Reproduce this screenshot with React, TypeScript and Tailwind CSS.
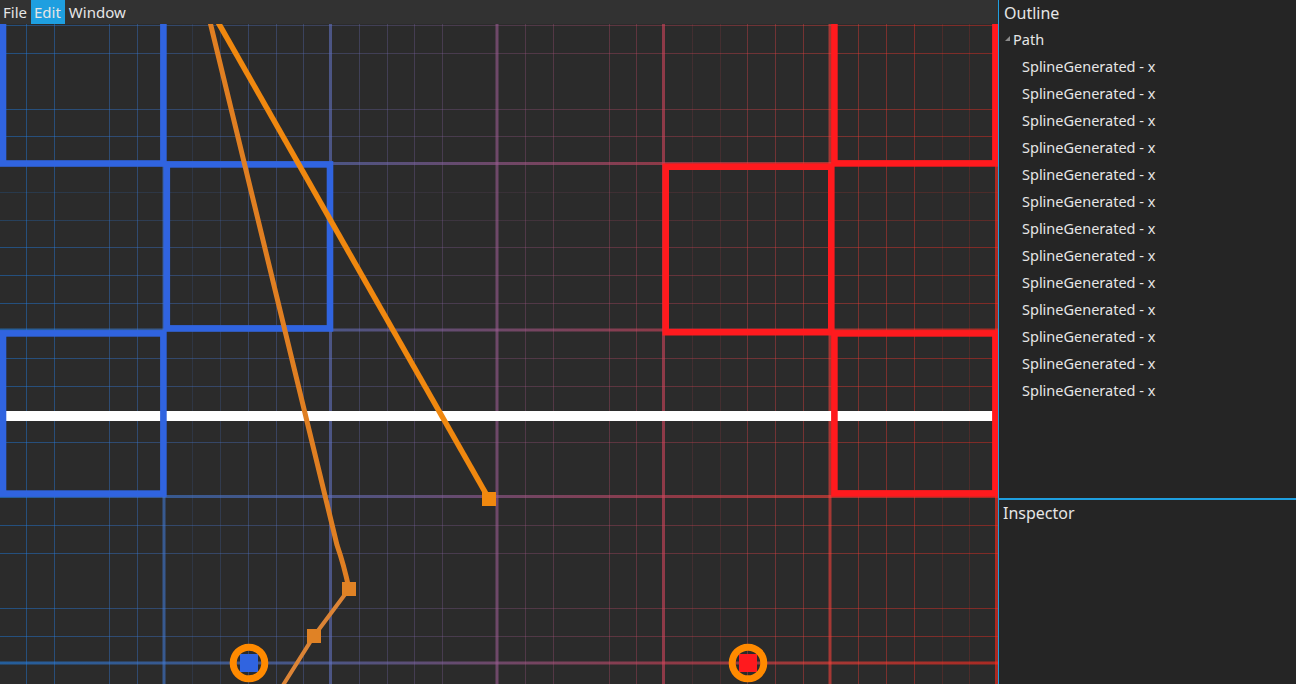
import React from "react";

const CELL = 166.5;
const X0 = -2.5;
const Y0 = -3;
const W = 998;
const TOP = 24;
const BOTTOM = 684;

// per major cell, how strong each of the 5 minor lines is drawn
const MINOR = [
  [1, 1, 0, 1, 1],
  [0.4, 0.6, 1, 1, 1],
  [1, 1, 1, 1, 0],
  [1, 1, 0, 1, 1],
  [0.4, 0.4, 1, 1, 1],
  [1, 1, 1, 0.4, 0.4],
];

function pattern(c: number) {
  return MINOR[((c % 6) + 6) % 6];
}

function Grid() {
  const minorV: { x: number; a: number }[] = [];
  const minorH: { y: number; a: number }[] = [];
  const majorV: number[] = [];
  const majorH: number[] = [];

  for (let c = -1; c < 8; c++) {
    const base = X0 + c * CELL;
    if (base > 0 && base < W) majorV.push(base);
    pattern(c).forEach((a, i) => {
      const x = Math.floor(base + ((i + 1) * CELL) / 6 + 1) + 0.5;
      if (a > 0 && x > 0 && x < W) minorV.push({ x, a });
    });
  }
  for (let r = -1; r < 6; r++) {
    const base = Y0 + r * CELL;
    if (base > TOP && base < BOTTOM) majorH.push(base);
    pattern(r).forEach((a, i) => {
      const y = Math.floor(base + ((i + 1) * CELL) / 6 + 1) + 0.5;
      if (a > 0 && y > TOP && y < BOTTOM) minorH.push({ y, a });
    });
  }

  return (
    <g>
      {minorV.map((l) => (
        <line key={"mv" + l.x} x1={l.x} x2={l.x} y1={TOP} y2={BOTTOM} stroke="url(#gridMinor)" strokeWidth={1} strokeOpacity={l.a} />
      ))}
      {minorH.map((l) => (
        <line key={"mh" + l.y} x1={0} x2={W} y1={l.y} y2={l.y} stroke="url(#gridMinor)" strokeWidth={1} strokeOpacity={l.a} />
      ))}
      {majorV.map((x) => (
        <line key={"Mv" + x} x1={x} x2={x} y1={TOP} y2={BOTTOM} stroke="url(#grid)" strokeWidth={3} strokeOpacity={0.6} />
      ))}
      {majorH.map((y) => (
        <line key={"Mh" + y} x1={0} x2={W} y1={y} y2={y} stroke="url(#grid)" strokeWidth={3} strokeOpacity={0.6} />
      ))}
    </g>
  );
}

const BLUE = "#3064e0";
const RED = "#ff1a1e";

// centre-line boxes [x1, y1, x2, y2]
const blueBoxes = [
  [3, -20, 163.4, 163.5],
  [166.8, 164.4, 330, 328.4],
  [3, 333.4, 163.4, 493.6],
];
const redBoxes = [
  [834.4, -20, 995.4, 163.4],
  [665.7, 166.7, 831.3, 332.2],
  [834.4, 333.4, 995.4, 493.4],
];

function Box({ b, color }: { b: number[]; color: string }) {
  return (
    <rect x={b[0]} y={b[1]} width={b[2] - b[0]} height={b[3] - b[1]} fill="none" stroke={color} strokeWidth={6.6} />
  );
}

function Canvas() {
  return (
    <div className="flex-1 bg-[#2b2b2b] overflow-hidden">
      <svg width={W} height={660} viewBox={`0 ${TOP} ${W} 660`} className="block">
        <defs>
          <linearGradient id="grid" gradientUnits="userSpaceOnUse" x1={0} y1={0} x2={W} y2={0}>
            <stop offset="0" stopColor="#1f80e6" />
            <stop offset="0.33" stopColor="#6171c0" />
            <stop offset="0.5" stopColor="#9b5b91" />
            <stop offset="0.665" stopColor="#d0445b" />
            <stop offset="0.83" stopColor="#f5403a" />
            <stop offset="1" stopColor="#ff2a1e" />
          </linearGradient>
          <linearGradient id="gridMinor" gradientUnits="userSpaceOnUse" x1={0} y1={0} x2={W} y2={0}>
            <stop offset="0" stopColor="#1a7ee6" stopOpacity={0.45} />
            <stop offset="0.33" stopColor="#6171c0" stopOpacity={0.32} />
            <stop offset="0.5" stopColor="#9b5b91" stopOpacity={0.3} />
            <stop offset="0.665" stopColor="#d0445b" stopOpacity={0.34} />
            <stop offset="0.83" stopColor="#f5403a" stopOpacity={0.38} />
            <stop offset="1" stopColor="#ff2a1e" stopOpacity={0.4} />
          </linearGradient>
        </defs>
        <Grid />
        <rect x={4} y={411} width={990} height={10} fill="#ffffff" />
        {blueBoxes.map((b, i) => (
          <Box key={"b" + i} b={b} color={BLUE} />
        ))}
        {redBoxes.map((b, i) => (
          <Box key={"r" + i} b={b} color={RED} />
        ))}

        {/* spline handles */}
        <path d="M204.7 0 L337 545 Q344 565 349 589" fill="none" stroke="#e07f22" strokeWidth={5} />
        <polyline points="349,589 314,636 280,690" fill="none" stroke="#dc8436" strokeWidth={4} />
        <rect x={342} y={582} width={14} height={14} fill="#e08225" />
        <rect x={307} y={629} width={14} height={14} fill="#e08225" />
        <line x1={205.4} y1={0} x2={489} y2={499} stroke="#f0880f" strokeWidth={5.5} />
        <rect x={482} y={492} width={14} height={14} fill="#f0880f" />

        {/* end points */}
        <rect x={240} y={654} width={18} height={18} fill={BLUE} />
        <circle cx={249} cy={663} r={15.8} fill="none" stroke="#ff8a00" strokeWidth={7} />
        <rect x={739} y={654} width={18} height={18} fill={RED} />
        <circle cx={748} cy={663} r={15.8} fill="none" stroke="#ff8a00" strokeWidth={7} />
      </svg>
    </div>
  );
}

function MenuBar() {
  const items = ["File", "Edit", "Window"];
  return (
    <div className="h-[24px] bg-[#323232] flex items-stretch gap-[1px] text-[15px] text-[#e6e6e6]">
      {items.map((m) => (
        <div key={m} className={"px-[3px] flex items-center leading-none " + (m === "Edit" ? "bg-[#1e9fe0] pr-[4px]" : "")}>
          {m}
        </div>
      ))}
    </div>
  );
}

function Panel() {
  const rows = Array.from({ length: 13 }, (_, i) => i);
  return (
    <div className="w-[298px] bg-[#252525] border-l border-[#1f9fe0] flex flex-col text-[#e6e6e6]">
      <div className="h-[498px] flex flex-col">
        <div className="h-[26px] leading-[26px] pl-[5px] text-[16px]">Outline</div>
        <div className="h-[27px] flex items-center text-[14.5px]">
          <svg width="5" height="5" viewBox="0 0 5 5" className="ml-[6px] mr-[3px] mt-[-2px]">
            <polygon points="5,0 5,5 0,5" fill="#8c8c8c" />
          </svg>
          <span>Path</span>
        </div>
        {rows.map((i) => (
          <div key={i} className="h-[27px] flex items-center pl-[23px] text-[14.5px]">
            SplineGenerated - x
          </div>
        ))}
      </div>
      <div className="border-t-2 border-[#1e9fe0] flex-1">
        <div className="h-[26px] leading-[26px] pl-[4px] text-[16px]">Inspector</div>
      </div>
    </div>
  );
}

export default function App() {
  return (
    <div className="w-[1296px] h-[684px] flex overflow-hidden bg-[#2b2b2b] font-['Noto_Sans',sans-serif]">
      <div className="w-[998px] flex flex-col">
        <MenuBar />
        <Canvas />
      </div>
      <Panel />
    </div>
  );
}
